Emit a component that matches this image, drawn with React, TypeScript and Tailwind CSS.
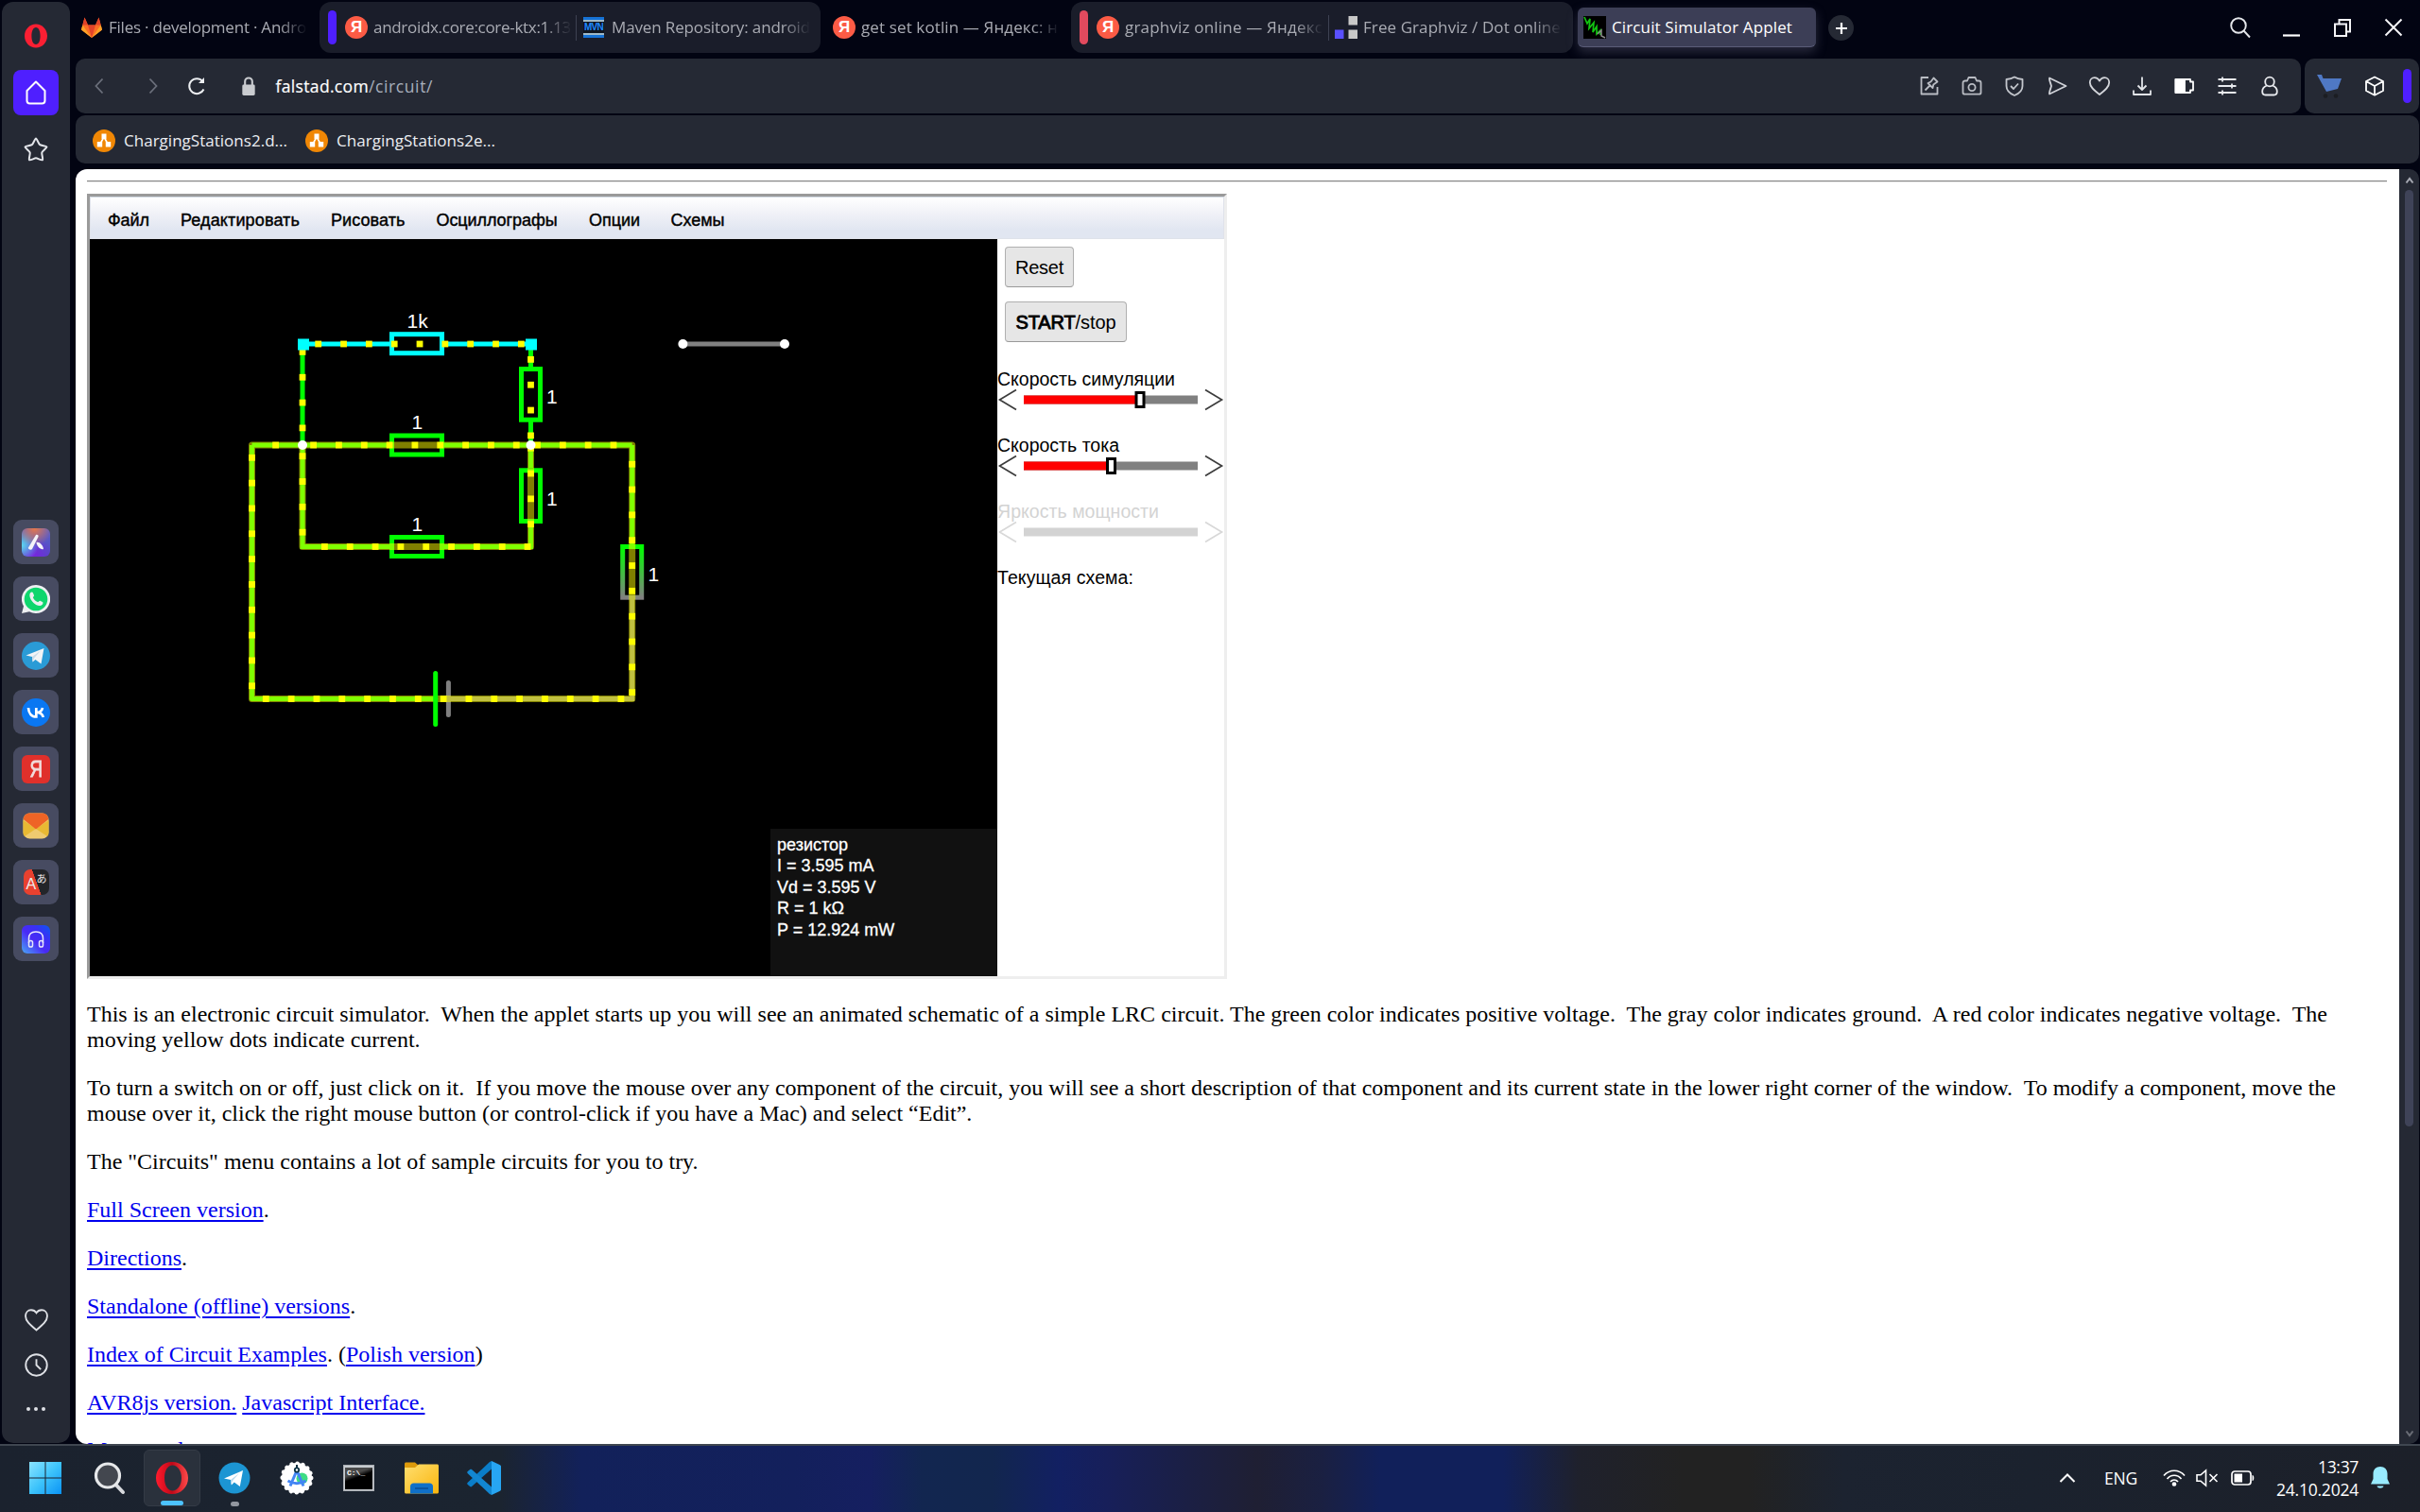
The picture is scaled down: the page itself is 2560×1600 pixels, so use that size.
import React, { useLayoutEffect, useRef } from "react";

/* Text run tracked so that it fills an exact advance width. */
function Fit({ w, className = "", children }: { w: number; className?: string; children: React.ReactNode }) {
  const ref = useRef<HTMLSpanElement>(null);
  useLayoutEffect(() => {
    const el = ref.current;
    if (!el) return;
    el.style.letterSpacing = "0px";
    const n = (el.textContent || "").length;
    const cur = el.getBoundingClientRect().width;
    if (n > 0) el.style.letterSpacing = `${(w - cur) / n}px`;
  }, [w]);
  return (
    <span ref={ref} className={`inline-block whitespace-nowrap ${className}`}>
      {children}
    </span>
  );
}

/* ---------- tab strip ---------- */

const Gitlab = () => (
  <svg viewBox="0 0 24 24" className="size-6 shrink-0">
    <path d="M12 23 1 14.5 4.5 1.5 8 9.5h8l3.500-8L23 14.500z" fill="#fc6d26" />
    <path d="M12 23 8 9.500h8z" fill="#e24329" />
    <path d="M12 23 1 14.500 2.300 9.500z" fill="#fca326" />
    <path d="M12 23 23 14.500 21.700 9.500z" fill="#fca326" />
    <path d="M4.500 1.500 2.300 9.500h5.700z" fill="#e24329" />
    <path d="M19.500 1.500 21.700 9.500h-5.700z" fill="#e24329" />
  </svg>
);

const Yandex = () => (
  <div className="flex size-6 shrink-0 items-center justify-center rounded-full bg-[#fc5b45]">
    <span className="font-['Liberation_Sans'] text-[17px] font-bold leading-6 text-white">Я</span>
  </div>
);

const Maven = () => (
  <div className="flex h-[22px] w-[22px] shrink-0 flex-col justify-between overflow-hidden bg-[#10151f]">
    <div className="h-[5px] border-b-2 border-[#9fb9c9] bg-[#1672d6]" />
    <span className="text-center font-['Liberation_Sans'] text-[10px] font-bold leading-[10px] tracking-[-0.8px] text-[#1e88ff]">MVN</span>
    <div className="h-[5px] border-t-2 border-[#9fb9c9] bg-[#1672d6]" />
  </div>
);

const Blocks = () => (
  <svg viewBox="0 0 24 24" className="size-6 shrink-0">
    <path d="M14.500 0H24v9.500h-9.500zM14.500 14.500H24V24h-9.500z" fill="#c8c8c8" />
    <path d="M0 14.500h9.500V24H0z" fill="#5a50ff" />
  </svg>
);

const CircuitIcon = () => (
  <svg viewBox="0 0 24 24" className="size-6 shrink-0 bg-black">
    <path d="M1 1l3 7 3-5-1 10 5-6-1 10 4-6 0 8 4-4 0 5" fill="none" stroke="#12c512" strokeWidth="1.700" />
    <path d="M15 19l4-4v6l4 2" fill="none" stroke="#8a8a8a" strokeWidth="1.500" />
  </svg>
);

function TabText({ w, children }: { w: number; children: string }) {
  return (
    <div className="w-[210px] shrink-0 text-[17px] leading-6 text-[#a9abb3] [mask-image:linear-gradient(to_right,black_86%,transparent)]">
      <Fit w={w}>{children}</Fit>
    </div>
  );
}

function TabStrip() {
  return (
    <div className="flex h-[58px] shrink-0 items-start pl-[5px] pt-[2px]">
      <div className="flex h-[54px] w-[253px] items-center gap-[6px]">
        <Gitlab />
        <TabText w={209}>Files · development · Andro</TabText>
      </div>
      <div className="flex h-[54px] w-[530px] items-center rounded-xl bg-[#1a1d2a] pl-[9px]">
        <div className="h-[36px] w-[9px] rounded-full bg-[#4f1fff]" />
        <div className="ml-[9px] flex"><Yandex /></div>
        <div className="ml-[6px]"><TabText w={209}>androidx.core:core-ktx:1.13</TabText></div>
        <div className="ml-[4px] h-[27px] w-px bg-[#3d4152]" />
        <div className="ml-[7px] flex"><Maven /></div>
        <div className="ml-[8px]"><TabText w={210}>Maven Repository: android</TabText></div>
      </div>
      <div className="flex h-[54px] w-[265px] items-center gap-[6px] pl-[13px]">
        <Yandex />
        <TabText w={208}>get set kotlin — Яндекс: н</TabText>
      </div>
      <div className="flex h-[54px] w-[531px] items-center rounded-xl bg-[#1a1d2a] pl-[9px]">
        <div className="h-[36px] w-[9px] rounded-full bg-[#e24a5e]" />
        <div className="ml-[9px] flex"><Yandex /></div>
        <div className="ml-[6px]"><TabText w={209}>graphviz online — Яндекс</TabText></div>
        <div className="ml-[5px] h-[27px] w-px bg-[#3d4152]" />
        <div className="ml-[6px] flex"><Blocks /></div>
        <div className="ml-[6px]"><TabText w={209}>Free Graphviz / Dot online</TabText></div>
      </div>
      <div className="ml-[5px] mt-[6px] flex h-[42px] w-[252px] items-center gap-[6px] rounded-md border-b border-[#5a5c78] bg-[#3c3e56] pl-[6px] shadow-[0_5px_12px_rgba(90,90,115,0.45)]">
        <CircuitIcon />
        <div className="text-[17px] leading-6 text-white"><Fit w={191}>Circuit Simulator Applet</Fit></div>
      </div>
      <div className="ml-[13px] mt-[14px] flex size-[27px] items-center justify-center rounded-full bg-[#252934]">
        <svg viewBox="0 0 12 12" className="size-3"><path d="M6 0v12M0 6h12" stroke="#fff" strokeWidth="2.200" /></svg>
      </div>
      <div className="ml-auto mr-[17px] mt-[15px] flex h-6 items-center">
        <svg viewBox="0 0 24 24" className="mr-px size-6" fill="none" stroke="#e4e6ea" strokeWidth="1.900"><circle cx="10" cy="10" r="7.800" /><path d="M15.500 15.500 22 22.500" /></svg>
        <svg viewBox="0 0 20 20" className="ml-[31px] size-5"><path d="M1 18.500h18" stroke="#fff" strokeWidth="2.200" /></svg>
        <svg viewBox="0 0 20 20" className="ml-[34px] size-5" fill="none" stroke="#f4f4f6" strokeWidth="2"><path d="M2 6.500h12V19H2zM6.500 6.500V2H18v12.500h-4" /></svg>
        <svg viewBox="0 0 20 20" className="ml-[34px] size-5" fill="none" stroke="#f4f4f6" strokeWidth="2"><path d="M1.500 1.500l17 17M18.500 1.500l-17 17" /></svg>
      </div>
    </div>
  );
}

/* ---------- address bar ---------- */

const toolbarIcons: React.ReactNode[] = [
  <g key="pin" stroke="#b9bcc3"><path d="M11 3H3.500v17.500h17V13" /><path d="M7.500 16.500l5-5M10.500 9l5 5 .8-3.500 4.200-3-4-4-3 4z" /></g>,
  <g key="cam" stroke="#b9bcc3"><path d="M2.500 8.500C2.500 7 3.500 6.500 5 6.500h2l1.500-3.500h7L17 6.500h2c1.500 0 2.500.500 2.500 2V19c0 1-.800 1.700-2 1.700h-15c-1.200 0-2-.700-2-1.700z" /><circle cx="12" cy="13.500" r="3.600" /></g>,
  <g key="shield" stroke="#c3c6cc"><path d="M12 2.500c3 2 5.500 2.300 8.500 2.500v7c0 4.500-3.500 8-8.500 10-5-2-8.500-5.500-8.500-10V5C6.500 4.800 9 4.500 12 2.500z" /><path d="M8 12l3 3 5-5.500" /></g>,
  <g key="send" stroke="#d0d2d8"><path d="M4 3.500 21.500 12 4 20.500c-1-.500 1.500-6 2-8.500C5.500 9.500 3 4 4 3.500z" /></g>,
  <g key="heart" stroke="#d4d6db"><path d="M12 21C6 16.500 1.800 13 1.800 8.300 1.800 5.200 4 3.200 6.700 3.200c2.300 0 4.100 1.300 5.300 3.400 1.200-2.100 3-3.400 5.300-3.400 2.700 0 4.900 2 4.900 5.100C22.200 13 18 16.500 12 21z" /></g>,
  <g key="dl" stroke="#e2e4e8"><path d="M12 2.500v13M7.500 11.500l4.500 4.500 4.500-4.500M3 16.500V21h18v-4.500" /></g>,
  <g key="battery" stroke="#fff"><path d="M2.500 5h15.500v2.500h3v9h-3V19H2.500z" /><path d="M2.500 5H12v14H2.500z" fill="#fff" /></g>,
  <g key="sliders" stroke="#e8eaee"><path d="M2.500 5h19M2.500 12h19M2.500 19h19M7 2.500v5M17 9.500v5M7 16.500v5" /></g>,
  <g key="user" stroke="#e8eaee"><circle cx="12" cy="7.500" r="4.800" /><path d="M9 11.500c-3 1.200-4.800 3.500-4.800 6.300 0 2.400 1.300 3.700 3.300 3.700h9c2 0 3.300-1.300 3.300-3.700 0-2.800-1.800-5.100-4.800-6.300" /></g>,
];

function AddressBar() {
  return (
    <div className="flex h-[58px] shrink-0 gap-[4px]">
      <div className="flex flex-1 items-center rounded-[10px] bg-[#252934]">
        <svg viewBox="0 0 10 18" className="ml-[20px] h-[18px] w-[10px]" fill="none" stroke="#6b6f7b" strokeWidth="1.800"><path d="M8.500 1.500 1.500 9l7 7.500" /></svg>
        <svg viewBox="0 0 10 18" className="ml-[47px] h-[18px] w-[10px]" fill="none" stroke="#6b6f7b" strokeWidth="1.800"><path d="M1.500 1.500 8.500 9l-7 7.500" /></svg>
        <svg viewBox="0 0 20 20" className="ml-[31px] size-5" fill="none" stroke="#eceef1" strokeWidth="2"><path d="M17.500 13.500a8 8 0 1 1-1.200-8.600" /><path d="M18 1v6h-6z" fill="#eceef1" stroke="none" /></svg>
        <svg viewBox="0 0 16 22" className="ml-[37px] h-[21px] w-4"><rect x="1" y="9" width="14" height="12" rx="1.500" fill="#c9cbcf" /><path d="M4 10V5.500a4 4 0 0 1 8 0V10" fill="none" stroke="#c9cbcf" strokeWidth="2.200" /></svg>
        <div className="ml-[20.500px] flex text-[17.500px] leading-6">
          <Fit w={98.5} className="text-white [-webkit-text-stroke:0.200px]">falstad.com</Fit>
          <Fit w={68} className="text-[#a7aebb]">/circuit/</Fit>
        </div>
        <div className="ml-auto mr-[21px] flex gap-[21px]">
          {toolbarIcons.map((icon, i) => (
            <svg key={i} viewBox="0 0 24 24" className="size-6" fill="none" strokeWidth="1.800" strokeLinejoin="round">{icon}</svg>
          ))}
        </div>
      </div>
      <div className="flex w-[121px] items-center rounded-[10px] bg-[#252934]">
        <svg viewBox="0 0 26 26" className="ml-[13px] size-[26px]"><path d="M0 1h5l1.500 4H26l-4 11-12 3z" fill="#4f78c4" /><circle cx="9" cy="23.500" r="2.300" fill="#1b1d22" /><circle cx="20" cy="23.500" r="2.300" fill="#1b1d22" /></svg>
        <svg viewBox="0 0 22 22" className="ml-[24px] size-[22px]" fill="none" stroke="#fff" strokeWidth="1.800" strokeLinejoin="round"><path d="M11 1.500 20 6v10l-9 4.700L2 16V6zM2 6l9 5 9-5M11 11v9.500" /></svg>
        <div className="ml-[19px] h-[36px] w-[9px] rounded-full bg-[#4f1fff]" />
      </div>
    </div>
  );
}

const DrawIo = () => (
  <svg viewBox="0 0 24 24" className="size-6 shrink-0">
    <circle cx="12" cy="12" r="12" fill="#f08705" />
    <path d="M12 8 7.500 16M12 8l4.500 8" stroke="#fff" strokeWidth="1.600" />
    <path d="M9.500 4.500h5V10h-5zM4.800 13h5.400v5.500H4.800zM13.800 13h5.400v5.500h-5.400z" fill="#fff" />
  </svg>
);

function Bookmarks() {
  return (
    <div className="mt-[2px] flex h-[51px] shrink-0 items-center rounded-[10px] bg-[#252934] pl-[18px] pt-[2px] text-[17px] text-[#eceef2]">
      <DrawIo />
      <Fit w={173} className="ml-[9px]">ChargingStations2.d...</Fit>
      <div className="ml-[19px] flex"><DrawIo /></div>
      <Fit w={168} className="ml-[9px]">ChargingStations2e...</Fit>
    </div>
  );
}

/* ---------- Opera sidebar ---------- */

const sideApps: React.ReactNode[] = [
  <div key="aria" className="flex size-[30px] items-center justify-center rounded-md bg-[radial-gradient(circle_at_45%_0%,#e8784a_0%,#e8784a00_55%),radial-gradient(circle_at_0%_60%,#5cd8f0_0%,#5cd8f000_50%),radial-gradient(circle_at_40%_100%,#7a22e0_0%,#7a22e000_60%),linear-gradient(#5a62c8,#5348c4)]">
    <svg viewBox="0 0 18 18" className="size-[18px]"><path d="M9 1c1.500-.500 3 .500 2.500 2L5 16c-1 1.500-4.500.500-4-1.500z" fill="#f4f4f8" /><path d="M9.500 9c3-1 7 3 7.500 7-3 1-7-2.500-7.500-7z" fill="#f4f4f8" /></svg>
  </div>,
  <svg key="wa" viewBox="0 0 30 30" className="size-[30px]"><path d="M15 0a15 15 0 1 1-7 28.200L0 30l2-7.500A15 15 0 0 1 15 0z" fill="#eef0f2" /><circle cx="15" cy="15" r="12.300" fill="#0fd66d" /><path d="M9 8.500c1-1.200 2.500-1.200 3 0l1 2.500c.3.800-1.300 2-1 2.600 1 2 2.500 3.500 4.800 4.500.700.300 1.800-1.700 2.600-1.300l2.500 1.200c1 .600.700 2-.400 3-2 1.800-6 .800-9-2s-5.300-7.800-3.500-10.500z" fill="#eef0f2" /></svg>,
  <svg key="tg" viewBox="0 0 30 30" className="size-[30px]"><circle cx="15" cy="15" r="15" fill="#2a9bd6" /><path d="M4.500 14.500 23.500 7l-3 16.500-6-4.500-3 2.500-.500-5.500z" fill="#f2f4f6" /><path d="M11 16l9-6.500-7 8-1.500 4z" fill="#c8dbe8" /></svg>,
  <svg key="vk" viewBox="0 0 30 30" className="size-[30px]"><circle cx="15" cy="15" r="15" fill="#0a77f2" /><path d="M7 10c.3 6 3.500 9.500 8.300 9.500V10M15.500 15c4 0 6-2.500 6.500-5M17 15c3 .300 5 2 5.800 5" fill="none" stroke="#fff" strokeWidth="2.700" /></svg>,
  <div key="ya" className="flex size-[30px] items-center justify-center rounded-md bg-[#e0302b]"><span className="scale-x-[0.820] font-['Liberation_Sans'] text-[23px] leading-[30px] text-[#f1dede] [-webkit-text-stroke:0.800px]">Я</span></div>,
  <svg key="mail" viewBox="0 0 30 30" className="size-[30px]"><rect x="1.500" y="1.500" width="27" height="27" rx="7" fill="#efcb70" /><path d="M1.500 9 15 18 3 26c-1-1-1.500-2-1.500-4zM28.500 9 15 18l12 8c1-1 1.500-2 1.500-4z" fill="#e8b933" /><path d="M1.700 8C2 4 4.500 1.500 8.500 1.500h13c4 0 6.500 2.500 6.800 6.500L15 18.500z" fill="#ee6426" /></svg>,
  <div key="tr" className="relative flex size-[27px] overflow-hidden rounded-[7px] bg-[linear-gradient(70deg,#e8412f_50%,#232529_51%)] text-[#eceaea]">
    <span className="absolute bottom-[2px] left-[3px] font-['Liberation_Sans'] text-[16px] leading-[18px]">A</span>
    <span className="absolute right-[2px] top-[3px] font-['Noto_Sans_CJK_JP'] text-[11px] leading-[13px]">あ</span>
  </div>,
  <div key="player" className="flex size-[30px] items-center justify-center rounded-md bg-[linear-gradient(45deg,#4aa8f5_0%,#4a2af5_45%,#3a30f5_70%,#0a58f0_100%)]">
    <svg viewBox="0 0 18 18" className="size-[18px]" fill="none" stroke="#e6e6fa" strokeWidth="1.500"><path d="M1.500 13V8C1.500 3.500 4.500 1 9 1s7.500 2.500 7.500 7v5" /><rect x="1.500" y="10.500" width="4" height="6.500" rx="1.800" /><rect x="12.500" y="10.500" width="4" height="6.500" rx="1.800" /></svg>
  </div>,
];

function Sidebar() {
  return (
    <div className="ml-[2px] mt-[2px] flex h-[1525px] w-[72px] shrink-0 flex-col items-center rounded-xl bg-[#252934]">
      <svg viewBox="0 0 26 26" className="mt-[23px] size-[26px]"><path fillRule="evenodd" d="M13 0.500c6.500 0 12 5.500 12 12.500s-5.500 12.500-12 12.500S1 20 1 13 6.500.500 13 .500zM13 4c-3 0-4.600 4-4.600 9s1.600 9 4.600 9 4.600-4 4.600-9S16 4 13 4z" fill="#fb1f33" /></svg>
      <div className="mt-[23px] flex size-12 items-center justify-center rounded-lg bg-[#4f1fff]">
        <svg viewBox="0 0 26 26" className="size-[26px]" fill="none" stroke="#fff" strokeWidth="2" strokeLinejoin="round"><path d="M13 1.500 22.500 11v10.500c0 2-1 3-3 3h-13c-2 0-3-1-3-3V11z" /></svg>
      </div>
      <svg viewBox="0 0 26 26" className="mt-[23px] size-[26px]" fill="none" stroke="#e3e5ea" strokeWidth="2" strokeLinejoin="round"><path d="M13 1.500c.8 0 3 5.500 4 6.500s7.500 1.500 7.500 2.500-4.800 4.500-5.200 6 1.500 7 .700 7.800-5.500-2-7-2-6.200 2.800-7 2 1.100-6.300.700-7.800-5.200-5-5.200-6S8 9 9 8s3.200-6.500 4-6.500z" /></svg>
      <div className="mt-[379px] flex flex-col gap-[13px]">
        {sideApps.map((a, i) => (
          <div key={i} className="flex h-[47px] w-12 items-center justify-center rounded-[9px] bg-[#474b61]">{a}</div>
        ))}
      </div>
      <div className="mt-auto mb-[25px] flex flex-col items-center gap-[23px]">
        <svg viewBox="0 0 24 24" className="size-[25px]" fill="none" stroke="#dfe1e6" strokeWidth="1.800"><path d="M12 22.500C6 17.500 1 13.500 1 8.300 1 4.700 3.500 2.200 6.700 2.200c2.200 0 4.100 1 5.300 2.800 1.200-1.800 3.100-2.800 5.300-2.800 3.200 0 5.700 2.500 5.700 6.100 0 5.200-5 9.200-11 14.200z" /></svg>
        <svg viewBox="0 0 24 24" className="size-[25px]" fill="none" stroke="#dfe1e6" strokeWidth="1.800"><circle cx="12" cy="12" r="10.800" /><path d="M12 6v6l4.500 4.500" /></svg>
        <svg viewBox="0 0 22 22" className="size-[22px]" fill="#dfe1e6"><circle cx="3" cy="11" r="2" /><circle cx="11" cy="11" r="2" /><circle cx="19" cy="11" r="2" /></svg>
      </div>
    </div>
  );
}

/* ---------- circuit canvas ---------- */

const STEP = 26.83;
type Run = [x: number, y: number, n: number, dir: "h" | "v"];
const dotRuns: Run[] = [
  [336.7, 364, 9, "h"],
  [320, 372.4, 4, "v"],
  [561.5, 380.4, 4, "v"],
  [291.6, 471, 1, "h"],
  [331.6, 471, 9, "h"],
  [568.5, 471, 4, "h"],
  [266.5, 484.3, 10, "v"],
  [320, 482.7, 4, "v"],
  [561.5, 474.2, 4, "v"],
  [343.4, 578.5, 9, "h"],
  [668.7, 491.2, 10, "v"],
  [281.3, 739.5, 15, "h"],
];
const loopPath =
  "M266.500 471H668.700M266.500 471V739.500M320 471V578.500H561.500V471M668.700 471V739.500M266.500 739.500H668.700";

function Circuit() {
  return (
    <svg viewBox="95 253 960 780" className="block h-[780px] w-[960px] bg-black">
      <defs>
        <linearGradient id="drop" x1="0" y1="0" x2="0" y2="1">
          <stop offset="0" stopColor="#00ff00" />
          <stop offset="1" stopColor="#808080" />
        </linearGradient>
      </defs>
      <g fill="none" strokeWidth="5" stroke="#00ff00" strokeLinecap="round">
        <path d="M320 364V471M561.500 364V390M561.500 446V471" />
        <path d="M266.500 471H412M470 471H668.700M266.500 471V739.500M320 471V578.500H412M470 578.500H561.500V555M561.500 471V495M668.700 471V576" strokeLinecap="butt" />
        <path d="M266.500 739.500H460.700" />
        <path d="M668.700 635V739.500H474.500" stroke="#808080" />
        <path d="M320 364H414M468 364H561.500" stroke="#00ffff" />
      </g>
      <g fill="none" strokeWidth="5" stroke="#00ff00">
        <rect x="414.500" y="353.700" width="53" height="20" stroke="#00ffff" />
        <rect x="414.500" y="461" width="53" height="20" />
        <rect x="414.500" y="568.500" width="53" height="20" />
        <rect x="551.500" y="390.500" width="20" height="53.700" />
        <rect x="551.500" y="497.800" width="20" height="53.700" />
        <rect x="658.700" y="578.500" width="20" height="53.700" stroke="url(#drop)" />
      </g>
      <g strokeWidth="5" strokeLinecap="round">
        <path d="M474.400 722.500V756.500" stroke="#808080" />
      </g>
      <path d={loopPath} fill="none" stroke="#ffff00" strokeOpacity="0.500" strokeWidth="7" strokeLinecap="round" strokeLinejoin="round" />
      <path d="M460.700 712.500V766.500" stroke="#00ff00" strokeWidth="5" strokeLinecap="round" />
      <path d="M722.400 364H830" stroke="#808080" strokeWidth="5" />
      <g fill="#ffff00">
        {dotRuns.flatMap(([x, y, n, dir], r) =>
          Array.from({ length: n }, (_, i) => (
            <rect key={`${r}-${i}`} x={(dir === "h" ? x + i * STEP : x) - 3.4} y={(dir === "v" ? y + i * STEP : y) - 3.4} width="6.800" height="6.800" />
          )),
        )}
      </g>
      <g fill="#fff">
        <circle cx="320" cy="471" r="5" />
        <circle cx="561.500" cy="471" r="5" />
        <circle cx="722.400" cy="364" r="5" />
        <circle cx="830" cy="364" r="5" />
      </g>
      <path d="M315 358.500h12v12h-12zM556 358.500h12v12h-12z" fill="#00ffff" />
      <g fill="#fff" fontFamily="Liberation Sans" fontSize="21">
        <text x="430.500" y="347">1k</text>
        <text x="435.500" y="454">1</text>
        <text x="435.500" y="561.500">1</text>
        <text x="578" y="427">1</text>
        <text x="578" y="534.700">1</text>
        <text x="685.500" y="615">1</text>
      </g>
    </svg>
  );
}

/* ---------- applet ---------- */

const menus: [string, number, string][] = [
  ["Файл", 44, "mr-[33px]"],
  ["Редактировать", 126, "mr-[33px]"],
  ["Рисовать", 78.5, "mr-[33px]"],
  ["Осциллографы", 128, "mr-[33.500px]"],
  ["Опции", 54, "mr-[32.500px]"],
  ["Схемы", 57, ""],
];

function SliderRow({ label, w, value, disabled }: { label: string; w: number; value: number; disabled?: boolean }) {
  return (
    <div className="h-[70px] pt-px">
      <div className={`h-[22px] text-[19.500px] leading-[24px] ${disabled ? "text-[#d3d3d3]" : "text-black"}`}>
        <Fit w={w}>{label}</Fit>
      </div>
      <svg viewBox="0 0 240 24" className="block h-6 w-[240px]">
        <path d="M20 1.500 2.500 12 20 22.500M220 1.500 237.500 12 220 22.500" fill="none" stroke={disabled ? "#d8d8d8" : "#3c3c3c"} strokeWidth="1.700" />
        <rect x="28" y="7.500" width="184" height="9" fill={disabled ? "#d3d3d3" : "#808080"} />
        {!disabled && (
          <>
            <rect x="28" y="7.500" width={value - 28} height="9" fill="#ff0000" />
            <rect x={value - 4} y="4.500" width="8" height="15" fill="#fff" stroke="#000" strokeWidth="3" />
          </>
        )}
      </svg>
    </div>
  );
}

function Applet() {
  return (
    <div className="mt-[12px] flex h-[831px] w-[1206px] flex-col border-[3px] border-b-[#eeeeee] border-l-[#9a9a9a] border-r-[#eeeeee] border-t-[#9a9a9a] font-['Liberation_Sans']">
      <div className="flex h-[45px] shrink-0 items-center border border-[#dfe2ea] border-t-[#d0d8e2] bg-[linear-gradient(to_bottom,#ffffff,#f0f1f7_40%,#e1e6f1_80%)] pl-[18px] pt-[5px] text-[18px] text-black [-webkit-text-stroke:0.400px_black]">
        {menus.map(([m, w, gap]) => (
          <Fit key={m} w={w} className={gap}>{m}</Fit>
        ))}
      </div>
      <div className="flex h-[780px]">
        <div className="relative h-[780px] w-[960px] shrink-0">
          <Circuit />
          <div className="absolute bottom-0 right-0 h-[156px] w-[240px] bg-[#111111] pl-[7px] pt-[6px] text-[18px] leading-[22.400px] text-white [-webkit-text-stroke:0.300px]">
            <div>резистор</div>
            <div>I = 3.595 mA</div>
            <div>Vd = 3.595 V</div>
            <div>R = 1 kΩ</div>
            <div>P = 12.924 mW</div>
          </div>
        </div>
        <div className="flex flex-1 flex-col items-start">
          <button className="ml-[8px] mt-[8px] h-[43px] w-[73px] rounded-[4px] border border-[#b0b0b0] border-b-[#999999] bg-[#e6e6e6] text-[20px] text-black">
            <Fit w={51}>Reset</Fit>
          </button>
          <button className="ml-[8px] mt-[15px] flex h-[43px] w-[129px] items-center justify-center rounded-[4px] border border-[#b0b0b0] border-b-[#999999] bg-[#e6e6e6] text-[20px] text-black">
            <Fit w={63} className="[-webkit-text-stroke:0.900px]">START</Fit>
            <Fit w={43}>/stop</Fit>
          </button>
          <div className="mt-[26px]">
            <SliderRow label="Скорость симуляции" w={188} value={151} />
            <SliderRow label="Скорость тока" w={129} value={120.5} />
            <SliderRow label="Яркость мощности" w={171} value={0} disabled />
            <div className="pt-px text-[19.500px] leading-[24px] text-black"><Fit w={144}>Текущая схема:</Fit></div>
          </div>
        </div>
      </div>
    </div>
  );
}

function Link({ children }: { children: string }) {
  return <span className="text-[#0000ee] underline decoration-[1.500px] underline-offset-[2.500px]">{children}</span>;
}

const NB = "\u00a0 ";

function Page() {
  return (
    <div className="h-[1349px] flex-1 overflow-hidden rounded-l-xl bg-white pl-[12px]">
      <div className="mt-[12px] h-[2px] w-[2433px] border-b border-t border-b-[#e4e4e4] border-t-[#858585]" />
      <Applet />
      <div className="mt-[24px] flex flex-col gap-[24px] whitespace-nowrap font-['Liberation_Serif'] text-[24px] leading-[27px] text-black">
        <div>
          <Fit w={2370}>This is an electronic circuit simulator.{NB}When the applet starts up you will see an animated schematic of a simple LRC circuit. The green color indicates positive voltage.{NB}The gray color indicates ground.{NB}A red color indicates negative voltage.{NB}The</Fit>
          <br />moving yellow dots indicate current.
        </div>
        <div>
          <Fit w={2379}>To turn a switch on or off, just click on it.{NB}If you move the mouse over any component of the circuit, you will see a short description of that component and its current state in the lower right corner of the window.{NB}To modify a component, move the</Fit>
          <br />mouse over it, click the right mouse button (or control-click if you have a Mac) and select “Edit”.
        </div>
        <div>The "Circuits" menu contains a lot of sample circuits for you to try.</div>
        <div><Link>Full Screen version</Link>.</div>
        <div><Link>Directions</Link>.</div>
        <div><Link>Standalone (offline) versions</Link>.</div>
        <div><Link>Index of Circuit Examples</Link>. (<Link>Polish version</Link>)</div>
        <div><Link>AVR8js version.</Link> <Link>Javascript Interface.</Link></div>
        <div className="-mt-px"><Link>More used</Link></div>
      </div>
    </div>
  );
}

function Scrollbar() {
  return (
    <div className="flex h-[1349px] w-[21px] shrink-0 flex-col items-center rounded-r-[10px] bg-[#252934]">
      <svg viewBox="0 0 10 8" className="mt-[8px] h-2 w-2.5" fill="none" stroke="#a7aab3" strokeWidth="2"><path d="M1.500 6.500 5 2l3.500 4.500" /></svg>
      <div className="mt-[6px] h-[991px] w-[9px] rounded-full bg-[#3f4358]" />
      <svg viewBox="0 0 10 8" className="mb-[7px] mt-auto h-2 w-2.5" fill="none" stroke="#6a6d76" strokeWidth="2"><path d="M1.500 1.500 5 6l3.500-4.500" /></svg>
    </div>
  );
}

/* ---------- Windows taskbar ---------- */

function Taskbar() {
  return (
    <div className="flex h-[72px] shrink-0 items-center border-t-2 border-[#3f4650] bg-[linear-gradient(to_right,#1b222e_0px,#1b2430_530px,#12215a_615px,#13205c_840px,#151f60_920px,#122650_975px,#12264e_1050px,#122062_1120px,#171f5a_1170px,#1a1f48_1240px,#1f1f33_1330px,#1a2042_1400px,#11205a_1460px,#11205a_1590px,#1f212c_1670px,#222222_1780px,#222222_1850px,#1c2330_1950px,#1b222e_2150px,#1c2029_2560px)] pb-[2px] pl-[30px]">
      <svg viewBox="0 0 36 36" className="size-9">
        <defs><linearGradient id="win" x1="0" y1="0" x2="1" y2="1"><stop offset="0" stopColor="#8be4ff" /><stop offset=".5" stopColor="#3ec4fb" /><stop offset="1" stopColor="#0a93f5" /></linearGradient></defs>
        <path d="M1 1h16.500v16.500H1zM18.500 1H35v16.500H18.500zM1 18.500h16.500V35H1zM18.500 18.500H35V35H18.500z" fill="url(#win)" />
      </svg>
      <svg viewBox="0 0 36 36" className="ml-[32px] size-9"><path d="M24.500 25 32 33" stroke="#d8dade" strokeWidth="4" strokeLinecap="round" /><circle cx="16" cy="15.500" r="12.500" fill="#43474f" stroke="#e6e8ea" strokeWidth="3.200" /></svg>
      <div className="relative ml-[18px] flex h-[60px] w-[60px] items-center justify-center rounded-md border border-[#343b46] bg-[#2a313c]">
        <svg viewBox="0 0 36 36" className="size-9">
          <defs><linearGradient id="op" x1="0" y1="0" x2="1" y2="0"><stop offset="0" stopColor="#ff1b2d" /><stop offset=".5" stopColor="#c00818" /><stop offset="1" stopColor="#ff4b4b" /></linearGradient></defs>
          <path fillRule="evenodd" d="M18 1c9.500 0 17 7.500 17 17s-7.500 17-17 17S1 27.500 1 18 8.500 1 18 1zM18.500 4.500c-5 0-8.500 5.500-8.500 13.500s3.500 13.500 8.500 13.500S28 26 28 18 23.500 4.500 18.500 4.500z" fill="url(#op)" />
        </svg>
        <div className="absolute bottom-0 left-[17px] h-[5px] w-6 rounded-full bg-[#4cc2ff]" />
      </div>
      <div className="relative ml-[18px] flex h-[60px] w-9 items-center justify-center">
        <svg viewBox="0 0 36 36" className="size-9"><circle cx="18" cy="18" r="16.500" fill="#1c95d3" /><path d="M7 18.500 27 10l-3.200 17-6-4.500-3 3-.600-5.500z" fill="#fff" /><path d="M14 20l9-7-7 8-1.500 4z" fill="#b9d9ec" /></svg>
        <div className="absolute bottom-0 left-[14px] h-[5px] w-[9px] rounded-full bg-[#9297a0]" />
      </div>
      <svg viewBox="0 0 36 36" className="ml-[30px] size-9">
        <circle cx="18" cy="18" r="16" fill="#fff" />
        <circle cx="18" cy="18" r="15.300" fill="none" stroke="#fff" strokeWidth="4.500" strokeLinecap="round" strokeDasharray="0.100 5.910" />
        <circle cx="23.500" cy="18.500" r="6" fill="#3ddc84" />
        <path d="M18 10 11 26.500M18 10l7 16.500M8.500 21c6 3.500 13 3.500 19 0" fill="none" stroke="#4285f4" strokeWidth="3" />
        <circle cx="18" cy="9.500" r="2.200" fill="#fff" stroke="#083042" strokeWidth="1.800" /><path d="M18 4v4" stroke="#083042" strokeWidth="2" />
      </svg>
      <div className="ml-[31px] flex h-[28px] w-[33px] flex-col border border-[#a9adb2] bg-[#c7cbd0] p-px pt-[2px]">
        <div className="h-full bg-[linear-gradient(160deg,#4a4a4a_30%,#000000_45%)] pl-[2px] font-['Liberation_Mono'] text-[8px] font-bold leading-[11px] text-white">C:\_</div>
      </div>
      <svg viewBox="0 0 36 36" className="ml-[32px] size-9">
        <defs><linearGradient id="fold" x1="0" y1="0" x2="1" y2="1"><stop offset="0" stopColor="#ffdf70" /><stop offset="1" stopColor="#f9b50d" /></linearGradient></defs>
        <path d="M0 3c0-.800.700-1.500 1.500-1.500H11L15 5v6H0z" fill="#dd9a0b" /><path d="M0 7h11l4-3.500h19.500c.800 0 1.500.700 1.500 1.500v28c0 .800-.700 1.500-1.500 1.500h-33C.700 34.500 0 33.800 0 33z" fill="url(#fold)" />
        <path d="M6 34.500V27c0-2 1.500-3.500 3.500-3.500h17c2 0 3.500 1.500 3.500 3.500v7.500z" fill="#1070c8" /><path d="M11 29h14" stroke="#0a4c94" strokeWidth="1.500" />
      </svg>
      <svg viewBox="0 0 36 36" className="ml-[30px] size-9">
        <path d="M26 0v8.500L5 27c-.5.500-1.200.500-1.800 0L.8 25c-.8-.700-.8-1.500 0-2.200L24 1z" fill="#0a7dc8" />
        <path d="M26 36v-8.500L5 9c-.5-.500-1.200-.500-1.800 0L.8 11c-.8.700-.8 1.500 0 2.200L24 35z" fill="#1287d2" />
        <path d="M26 0l8.500 4c1 .500 1.500 1 1.500 2v24c0 1-.500 1.500-1.500 2L26 36z" fill="#27a5f2" />
      </svg>

      <div className="ml-auto flex h-full items-center text-white">
        <svg viewBox="0 0 18 10" className="h-[10px] w-[18px]" fill="none" stroke="#fff" strokeWidth="2"><path d="M1.500 9 9 1.500 16.500 9" /></svg>
        <span className="ml-[30px] text-[17.500px] leading-6"><Fit w={35}>ENG</Fit></span>
        <svg viewBox="0 0 24 18" className="ml-[27px] h-[18px] w-6" fill="none" stroke="#fff" strokeWidth="1.700"><path d="M1 6.500C7-.500 17-.500 23 6.500M4.500 10c4-5 11-5 15 0M8 13c2.200-2.700 5.800-2.700 8 0" /><circle cx="12" cy="15.500" r="1.500" fill="#fff" /></svg>
        <svg viewBox="0 0 24 20" className="ml-[11px] h-5 w-6" fill="none" stroke="#fff" strokeWidth="1.600"><path d="M1 6.800h4L10.500 2v16L5 13.200H1zM14.500 6l8 8M22.500 6l-8 8" /></svg>
        <svg viewBox="0 0 25 16" className="ml-[13px] h-4 w-[25px]"><rect x="1" y="1" width="20" height="14" rx="3" fill="none" stroke="#fff" strokeWidth="1.700" /><rect x="3.500" y="3.500" width="8.500" height="9" fill="#fff" /><path d="M22.500 5v6c1.300 0 1.800-1 1.800-3s-.500-3-1.800-3z" fill="#fff" /></svg>
        <div className="ml-[23px] flex w-[87px] flex-col items-end text-[17.500px] leading-[24px]">
          <Fit w={43}>13:37</Fit>
          <Fit w={87}>24.10.2024</Fit>
        </div>
        <svg viewBox="0 0 20 24" className="ml-[13px] mr-[32px] h-6 w-5"><path d="M10 0c4.500 0 7.500 3 7.500 7.500V13l2.500 5.500H0L2.500 13V7.500C2.500 3 5.500 0 10 0zM6.500 20.500h7c-.500 3-6.500 3-7 0z" fill="#99ebff" /></svg>
      </div>
    </div>
  );
}

export default function App() {
  return (
    <div className="flex h-[1600px] w-[2560px] flex-col overflow-hidden bg-[#020412] font-['Open_Sans','Noto_Sans',sans-serif]">
      <div className="flex h-[1528px] shrink-0">
        <Sidebar />
        <div className="ml-[6px] flex w-[2479px] shrink-0 flex-col">
          <TabStrip />
          <div className="h-[4px] shrink-0" />
          <AddressBar />
          <Bookmarks />
          <div className="mt-[6px] flex">
            <Page />
            <Scrollbar />
          </div>
        </div>
      </div>
      <Taskbar />
    </div>
  );
}
